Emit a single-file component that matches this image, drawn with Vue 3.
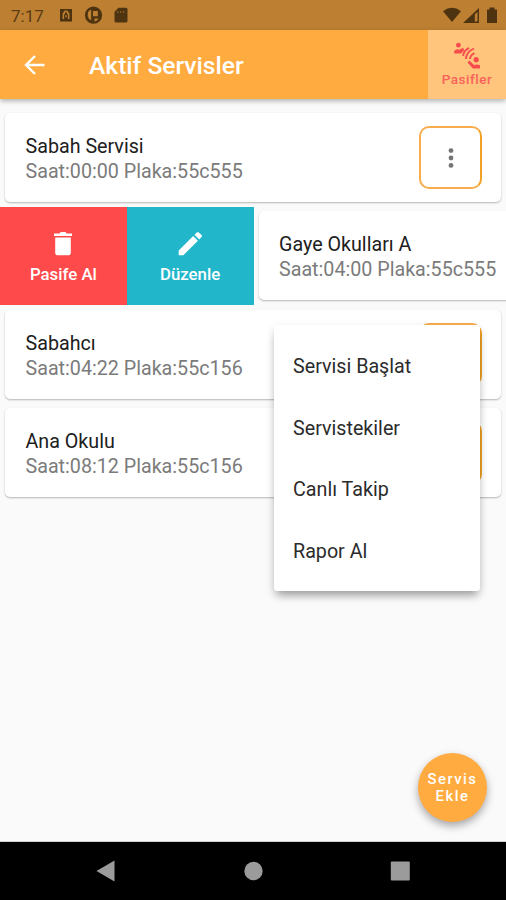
<script setup>
const services = [
  { name: 'Sabah Servisi', time: '00:00', plate: '55c555' },
  { name: 'Gaye Okulları A', time: '04:00', plate: '55c555', swiped: true },
  { name: 'Sabahcı', time: '04:22', plate: '55c156' },
  { name: 'Ana Okulu', time: '08:12', plate: '55c156' },
]
const menu = ['Servisi Başlat', 'Servistekiler', 'Canlı Takip', 'Rapor Al']
</script>

<template>
  <div class="screen">
    <div class="status">
      <span class="clock">7:17</span>
      <svg class="s-left" width="70" height="18" viewBox="0 0 70 18">
        <path fill-rule="evenodd" d="M1 3h12v12.500H1zM3.600 13h1.500V9L7 5.500 8.900 9v4h1.500V7.500L8.300 4.600H5.700L3.600 7.500zM6.300 9.300h1.400v2H6.300z" />
        <circle cx="34.500" cy="9.200" r="8.600" />
        <path class="cut" d="M29 6.200q1-2 3.200-2.400v10.400l-2.200-1.200q-2-3-1-6.800zM34 5h4.800v5.200H34zM35.500 12.500h4.200q-1.500 2.600-4.200 3z" />
        <path fill-rule="evenodd" d="M59.500 1.800h7.500q1.500 0 1.500 1.500v11.700q0 1.500-1.500 1.500h-10q-1.500 0-1.500-1.500V5.800z" />
        <path class="slots" d="M58.500 5v2M61.500 5v2M64.500 5v2" />
      </svg>
      <svg class="s-right" width="58" height="18" viewBox="0 0 58 18">
        <path d="M1 5.200Q10 -1.500 19 5.200L10 16z" />
        <path fill-rule="evenodd" d="M37 2v15H21zM32.800 8.500V15.500h2.700V5.800z" />
        <path d="M45 3.500h2.500V1.500h5v2H55V17H45z" />
      </svg>
    </div>

    <header class="bar">
      <svg class="back" width="24" height="24" viewBox="0 0 24 24"><path d="M21.500 12H3.500M12 3L3 12l9 9" fill="none" stroke="#fff" stroke-width="2.400" /></svg>
      <h1>Aktif Servisler</h1>
      <button class="passive">
        <svg width="28" height="28" viewBox="0 0 28 28">
          <circle cx="5.400" cy="3.200" r="2.400" />
          <path d="M1.200 11.600V9q2.300-2.500 5-1.300l3.800-1.900 1.300 2.200-3.300 3.600z" />
          <circle cx="23.200" cy="17.700" r="2.600" />
          <path d="M27 26.600v-3.400q-3-1.500-6-.2l-4.600-4.400-1.900 1.900 5.400 6.100z" />
          <path d="M10 14q.8-5.500 6-8.200M13 17q0-7 8-10.500M17 17q.3-4 4.500-5.800" fill="none" stroke="#f64c4d" stroke-width="1.900" />
        </svg>
        <span>Pasifler</span>
      </button>
    </header>

    <main>
      <div v-for="s in services" :key="s.name" class="row">
        <div v-if="s.swiped" class="actions">
          <button class="action remove">
            <svg width="24" height="26" viewBox="0 0 24 26"><path d="M3 2.500h5.500L9.800 1h4.500l1.300 1.500H21V5H3zM4.200 6.500h15.600v15.200q0 2.500-2.500 2.500H6.700q-2.500 0-2.500-2.500z" /></svg>
            <span>Pasife Al</span>
          </button>
          <button class="action edit">
            <svg width="24" height="26" viewBox="0 0 24 26"><path d="M.7 19.500L15.200 5l4.700 4.700L5.400 24.200H.7zM16.500 3.700l2.300-2.300q1-1 2 0l2.700 2.700q1 1 0 2L21.200 8.400z" /></svg>
            <span>Düzenle</span>
          </button>
        </div>
        <section class="card">
          <div class="info">
            <h2>{{ s.name }}</h2>
            <p>Saat:{{ s.time }} Plaka:{{ s.plate }}</p>
          </div>
          <button class="more">
            <svg width="6" height="20" viewBox="0 0 6 20"><circle cx="3" cy="2.600" r="2.400" /><circle cx="3" cy="10" r="2.400" /><circle cx="3" cy="17.400" r="2.400" /></svg>
          </button>
        </section>
      </div>
    </main>

    <div class="menu">
      <div v-for="m in menu" :key="m" class="item">{{ m }}</div>
    </div>

    <button class="fab">Servis<br />Ekle</button>

    <nav>
      <svg width="20" height="22" viewBox="0 0 20 22"><path d="M.5 11L18.500 .5v21z" /></svg>
      <svg width="20" height="22" viewBox="0 0 20 22"><circle cx="10.500" cy="11" r="9.200" /></svg>
      <svg width="20" height="22" viewBox="0 0 20 22"><rect x=".8" y="1.500" width="19" height="19" rx="1" /></svg>
    </nav>
  </div>
</template>

<style>
body {
  margin: 0;
}
</style>

<style scoped>
.screen {
  position: relative;
  display: flex;
  flex-direction: column;
  width: 506px;
  height: 900px;
  overflow: hidden;
  background: #fafafa;
  font-family: Roboto, sans-serif;
}
button {
  margin: 0;
  padding: 0;
  border: 0;
  font-family: inherit;
}
svg {
  display: block;
}
.status {
  display: flex;
  align-items: center;
  box-sizing: border-box;
  height: 30px;
  flex: none;
  padding: 0 6px 0 11px;
  background: #bd8032;
  color: #5b3c13;
  fill: #4e3310;
}
.cut {
  fill: #bd8032;
}
.slots {
  stroke: #8a5c22;
  stroke-width: 1.300;
}
.clock {
  width: 48px;
  padding-top: 1px;
  font-size: 17px;
}
.s-right {
  margin-left: auto;
}
.bar {
  position: relative;
  z-index: 2;
  display: flex;
  align-items: center;
  flex: none;
  height: 69px;
  padding-left: 23px;
  background: #ffab40;
  box-shadow: 0 2px 5px rgba(0, 0, 0, 0.3);
}
h1 {
  margin: 1px 0 0 42px;
  color: #fff;
  font-size: 24.600px;
  font-weight: 500;
}
.passive {
  display: flex;
  flex-direction: column;
  align-items: center;
  box-sizing: border-box;
  width: 78px;
  height: 69px;
  margin-left: auto;
  padding-top: 12px;
  background: #ffc57d;
  color: #f9625a;
  fill: #f64c4d;
  font-size: 13.500px;
  font-weight: 500;
  line-height: 18px;
  letter-spacing: 0.500px;
}
main {
  flex: 1;
  padding-top: 10px;
}
.row {
  display: flex;
  height: 98.300px;
}
.actions {
  display: flex;
  flex: none;
  width: 253.500px;
  height: 97.500px;
}
.action {
  display: flex;
  flex: 1;
  flex-direction: column;
  align-items: center;
  padding-top: 24px;
  color: #fff;
  fill: #fff;
  font-size: 16.800px;
  font-weight: 500;
  line-height: 20px;
}
.action span {
  margin-top: 7px;
}
.remove {
  background: #ff4a4b;
}
.edit {
  background: #22b6cb;
}
.card {
  display: flex;
  flex: none;
  align-items: center;
  justify-content: space-between;
  box-sizing: border-box;
  width: 496px;
  height: 89px;
  margin: 4px 5px;
  padding: 0 19px 0 20.500px;
  border-radius: 5px;
  background: #fff;
  box-shadow: 0 1px 2px rgba(0, 0, 0, 0.28);
}
.info {
  padding-top: 3px;
  white-space: nowrap;
}
h2,
p {
  margin: 0;
  font-size: 19.700px;
  font-weight: 400;
  line-height: 25px;
}
h2 {
  color: #202020;
}
p {
  color: #7b7b7b;
}
.more {
  display: grid;
  place-items: center;
  box-sizing: border-box;
  width: 63px;
  height: 63px;
  border: 2px solid #f9ac4b;
  border-right-color: #f2a224;
  border-radius: 10px;
  background: #fff;
  fill: #757575;
}
.menu {
  position: absolute;
  z-index: 3;
  top: 325px;
  left: 274px;
  box-sizing: border-box;
  width: 206px;
  height: 266px;
  padding: 11px 19px;
  border-radius: 3px;
  background: #fff;
  box-shadow: 0 7px 9px -3px rgba(0, 0, 0, 0.32), 0 3px 10px rgba(0, 0, 0, 0.12);
}
.item {
  height: 61.500px;
  color: #2b2b2b;
  font-size: 19.700px;
  line-height: 61.500px;
}
.fab {
  position: absolute;
  z-index: 2;
  top: 753px;
  left: 418px;
  width: 69px;
  height: 69px;
  border-radius: 50%;
  background: #ffab40;
  box-shadow: 0 4px 8px rgba(0, 0, 0, 0.34);
  color: #fff;
  font-size: 14.800px;
  font-weight: 500;
  line-height: 17px;
  letter-spacing: 1.500px;
}
nav {
  display: flex;
  flex: none;
  align-items: center;
  justify-content: space-between;
  box-sizing: border-box;
  height: 58px;
  padding: 0 96px;
  background: #000;
  box-shadow: 0 0 1px #000;
  fill: #9b9b9b;
}
</style>
